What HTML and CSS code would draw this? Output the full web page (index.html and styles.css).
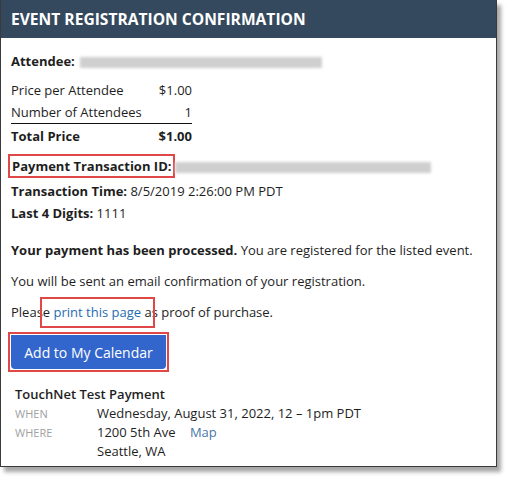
FILE: index.html
```html
<!DOCTYPE html>
<html>
<head>
<meta charset="utf-8">
<link rel="stylesheet" href="styles.css">
</head>
<body>
<div class="card">
  <div class="header">EVENT REGISTRATION CONFIRMATION</div>
  <div class="content">
    <div class="line attendee"><b>Attendee:</b> <span class="blur blur-attendee"></span></div>
    <table class="prices">
      <tr><td>Price per Attendee</td><td class="num">$1.00</td></tr>
      <tr class="last"><td>Number of Attendees</td><td class="num">1</td></tr>
      <tr class="total"><td>Total Price</td><td class="num">$1.00</td></tr>
    </table>
    <div class="line txid"><b class="boxed">Payment Transaction ID:</b><span class="blur blur-tx"></span></div>
    <div class="line"><b>Transaction Time:</b> 8/5/2019 2:26:00 PM PDT</div>
    <div class="line"><b>Last 4 Digits:</b> 1111</div>
    <p class="para first"><b>Your payment has been processed.</b> You are registered for the listed event.</p>
    <p class="para">You will be sent an email confirmation of your registration.</p>
    <p class="para">Pleas<span class="linkbox">e <a href="#">print this page</a> a</span>s proof of purchase.</p>
    <div class="btnwrap"><button class="btn">Add to My Calendar</button></div>
    <div class="event">
      <div class="ev-title">TouchNet Test Payment</div>
      <div class="ev-row"><span class="ev-label">WHEN</span><span class="ev-val">Wednesday, August 31, 2022, 12 – 1pm PDT</span></div>
      <div class="ev-row"><span class="ev-label">WHERE</span><span class="ev-val">1200 5th Ave <a class="map" href="#">Map</a><br>Seattle, WA</span></div>
    </div>
  </div>
</div>
</body>
</html>
```
FILE: styles.css
```css
html, body { margin: 0; padding: 0; background: #fff; }
body { width: 507px; height: 478px; overflow: hidden; font-family: "Open Sans", "Noto Sans", sans-serif; color: #1e1e1e; font-size: 13px; }
.card { width: 495px; height: 466px; border: 1px solid #3a3a3a; border-top: 0; overflow: hidden; box-shadow: 4px 5px 4px rgba(0,0,0,0.35); box-sizing: content-box; }
.header { background: #34495e; color: #fff; font-weight: 700; font-size: 15.6px; height: 38px; line-height: 38px; padding-left: 10px; }
.content { padding: 12px 10px 0 10px; }
.line { height: 22px; line-height: 22px; white-space: nowrap; }
.attendee { margin-bottom: 7px; }
.blur { display: inline-block; vertical-align: middle; height: 11px; background: #cfcfcf; filter: blur(1.5px); }
.blur-attendee { width: 242px; margin-left: 2px; }
.blur-tx { width: 256px; margin-left: 3px; }
.prices { border-collapse: collapse; width: 181px; }
.prices td { padding: 0; height: 22px; line-height: 22px; }
.prices .num { text-align: right; }
.prices tr.last td { border-bottom: 1px solid #111; }
.prices tr.total td { font-weight: 700; height: 23px; }
.txid { margin-top: 8px; margin-bottom: 3px; }
.boxed { outline: 2px solid #e04848; outline-offset: 1px; padding: 0 1px; }
.para { margin: 0; padding-top: 14px; line-height: 17px; }
.para.first { padding-top: 18px; }
.linkbox { padding: 3px 0 4px; outline: 2px solid #e04848; outline-offset: 1px; }
.para a { color: #1f6db3; text-decoration: none; }
.btnwrap { display: inline-block; margin-top: 14px; outline: 2px solid #e04848; outline-offset: 1px; }
.btn { display: block; background: #3366cc; color: #fff; border: 0; border-radius: 0 0 4px 4px; font-family: "Open Sans", sans-serif; font-size: 14px; height: 34px; width: 155px; padding: 0; }
.event { padding: 15px 0 0 4px; }
.ev-title { font-size: 13px; font-weight: 600; line-height: 20px; }
.ev-row { display: flex; line-height: 19px; }
.ev-label { width: 82px; color: #a0a0a0; font-size: 11px; }
.ev-val { flex: 1; }
.map { color: #4a76a8; text-decoration: none; margin-left: 11px; }
```
